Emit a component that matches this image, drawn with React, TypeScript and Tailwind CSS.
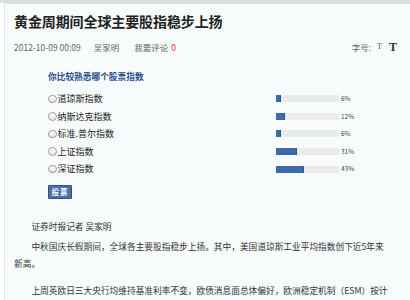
import React from "react";

const font = { fontFamily: '"Noto Sans CJK SC", "Noto Sans", sans-serif' };

const rows = [
  { label: "道琼斯指数", pct: 6 },
  { label: "纳斯达克指数", pct: 12 },
  { label: "标准.普尔指数", pct: 6 },
  { label: "上证指数", pct: 31 },
  { label: "深证指数", pct: 43 },
];

export default function App() {
  return (
    <div
      className="w-[410px] h-[300px] overflow-hidden bg-white border-t-[3px] border-[#dddddd]"
      style={font}
    >
      <div className="ml-[4px] h-full border-l border-t border-[#d6e7ef] bg-[#f7fbfc]">
        <div className="pl-[9px] pt-[7px]">
          <h1 className="text-[14px] leading-[20px] font-bold text-[#222] tracking-[-0.1px]">
            黄金周期间全球主要股指稳步上扬
          </h1>
          <div className="flex items-center h-[12px] mt-[10px] text-[8.5px] text-[#666] pr-[13px]">
            <span>2012-10-09 00:09</span>
            <span className="ml-[13px]">吴家明</span>
            <span className="ml-[15px]">我要评论</span>
            <span className="ml-[3px] text-[#e0302a]">0</span>
            <span className="ml-auto">字号:</span>
            <span className="ml-[6px] text-[8px] text-[#555]" style={{ fontFamily: '"Liberation Serif", serif' }}>T</span>
            <span className="ml-[7px] text-[12px] font-bold text-[#333]" style={{ fontFamily: '"Liberation Serif", serif' }}>T</span>
          </div>
        </div>

        <div className="pl-[43px] mt-[18px]">
          <div className="text-[8.7px] leading-[12px] font-bold text-[#2b4f8c]">你比较熟悉哪个股票指数</div>
          <div className="mt-[7px]">
            {rows.map((r) => (
              <div key={r.label} className="flex items-center h-[17.6px]">
                <div className="w-[228px] flex items-center">
                  <span className="w-[8.5px] h-[8.5px] rounded-full border border-[#9a9a9a] bg-gradient-to-b from-white to-[#e4e4e4]" />
                  <span className="ml-[1px] text-[9px] text-[#222]">{r.label}</span>
                </div>
                <div className="w-[63px] h-[7px] bg-[#ebebeb]">
                  <div className="h-full bg-[#3c6ba8] border-r border-[#2d5690]" style={{ width: `${Math.round((63 * r.pct) / 100) + 1}px` }} />
                </div>
                <span className="ml-[2px] text-[6.5px] text-[#444]">{r.pct}%</span>
              </div>
            ))}
          </div>
          <button className="mt-[7px] w-[24px] h-[14px] flex items-center justify-center bg-[#4a70a6] border border-[#2f5288] rounded-[1px] text-white text-[7.5px] font-bold tracking-[1px]">
            投票
          </button>
        </div>

        <div className="mt-[19px] pl-[9px] w-[386px] text-[8.7px] leading-[17px] text-[#333]">
          <p className="indent-[17.4px]">证券时报记者 吴家明</p>
          <p className="indent-[17.4px] mt-[3px]">中秋国庆长假期间，全球各主要股指稳步上扬。其中，美国道琼斯工业平均指数创下近5年来新高。</p>
          <p className="indent-[17.4px] mt-[10px]">上周英欧日三大央行均维持基准利率不变，欧债消息面总体偏好，欧洲稳定机制（ESM）按计划启动，市场风险偏好上升。</p>
        </div>
      </div>
    </div>
  );
}
